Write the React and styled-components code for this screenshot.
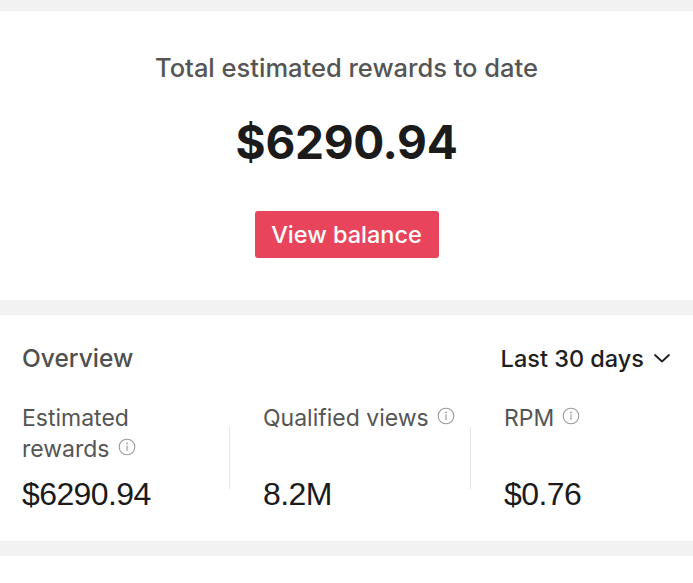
import React from 'react';
import styled, { createGlobalStyle } from 'styled-components';

const GlobalStyle = createGlobalStyle`
  html, body {
    margin: 0;
    padding: 0;
    background: #f2f2f2;
    font-family: Inter, "Liberation Sans", Arial, sans-serif;
  }
`;

const Page = styled.div`
  width: 693px;
  height: 583px;
  padding-top: 11px;
  display: flex;
  flex-direction: column;
  gap: 15px;
  box-sizing: border-box;
  overflow: hidden;
`;

const Card = styled.section`
  background: #fff;
  height: ${(p) => p.$h}px;
  box-sizing: border-box;
  flex-shrink: 0;
`;

const Hero = styled(Card)`
  display: flex;
  flex-direction: column;
  align-items: center;
  padding-top: 42px;
`;

const HeroTitle = styled.div`
  font-size: 25.5px;
  font-weight: 500;
  color: #555;
  line-height: 30px;
`;

const HeroAmount = styled.div`
  margin-top: 33px;
  font-size: 46px;
  font-weight: 700;
  color: #1b1b1b;
  line-height: 52px;
  letter-spacing: -0.3px;
`;

const BalanceButton = styled.button`
  margin-top: 43px;
  width: 184px;
  height: 47px;
  border: none;
  border-radius: 3px;
  background: #e8455c;
  color: #fff;
  font-family: inherit;
  font-size: 23.5px;
  font-weight: 500;
  cursor: pointer;
`;

const Overview = styled(Card)`
  padding: 28px 22px 0 22px;
`;

const HeaderRow = styled.div`
  display: flex;
  justify-content: space-between;
  align-items: center;
  height: 30px;
`;

const SectionTitle = styled.div`
  font-size: 24.5px;
  font-weight: 500;
  color: #505050;
`;

const RangePicker = styled.div`
  display: flex;
  align-items: center;
  gap: 9px;
  font-size: 23.5px;
  font-weight: 500;
  color: #1f1f1f;
`;

const Stats = styled.div`
  margin-top: 30px;
  display: grid;
  grid-template-columns: 241px 241px 1fr;
`;

const Stat = styled.div`
  display: flex;
  flex-direction: column;
  position: relative;
`;

const Divider = styled.span`
  position: absolute;
  left: -34px;
  top: 24px;
  width: 1px;
  height: 62px;
  background: #e6e6e6;
`;

const Label = styled.div`
  font-size: 23px;
  line-height: 31px;
  color: #555;
  height: 62px;
  max-width: ${(p) => p.$maxw}px;
`;

const Value = styled.div`
  margin-top: 11px;
  font-family: "Liberation Sans", Arial, sans-serif;
  font-size: 32px;
  color: #1b1b1b;
  letter-spacing: -0.6px;
`;

const InfoIcon = () => (
  <svg width="18" height="18" viewBox="0 0 18 18" style={{ verticalAlign: '1px', marginLeft: 8 }}>
    <circle cx="9" cy="9" r="7.8" fill="none" stroke="#9a9a9a" strokeWidth="1.1" />
    <circle cx="9" cy="5.4" r="0.9" fill="#9a9a9a" />
    <rect x="8.45" y="7.4" width="1.1" height="5.6" fill="#9a9a9a" />
  </svg>
);

const Chevron = () => (
  <svg width="18" height="12" viewBox="0 0 18 12">
    <path d="M2 3 L9 9.5 L16 3" fill="none" stroke="#1f1f1f" strokeWidth="1.8" strokeLinecap="round" strokeLinejoin="round" />
  </svg>
);

const stats = [
  { label: 'Estimated rewards', value: '$6290.94', maxw: 160 },
  { label: 'Qualified views', value: '8.2M', maxw: 215 },
  { label: 'RPM', value: '$0.76', maxw: 200 },
];

export default function App() {
  return (
    <>
      <GlobalStyle />
      <Page>
        <Hero $h={289}>
          <HeroTitle>Total estimated rewards to date</HeroTitle>
          <HeroAmount>$6290.94</HeroAmount>
          <BalanceButton>View balance</BalanceButton>
        </Hero>
        <Overview $h={226}>
          <HeaderRow>
            <SectionTitle>Overview</SectionTitle>
            <RangePicker>
              Last 30 days
              <Chevron />
            </RangePicker>
          </HeaderRow>
          <Stats>
            {stats.map((s, i) => (
              <Stat key={s.label}>
                {i > 0 && <Divider />}
                <Label $maxw={s.maxw}>
                  {s.label}
                  <InfoIcon />
                </Label>
                <Value>{s.value}</Value>
              </Stat>
            ))}
          </Stats>
        </Overview>
        <Card $h={40} />
      </Page>
    </>
  );
}
